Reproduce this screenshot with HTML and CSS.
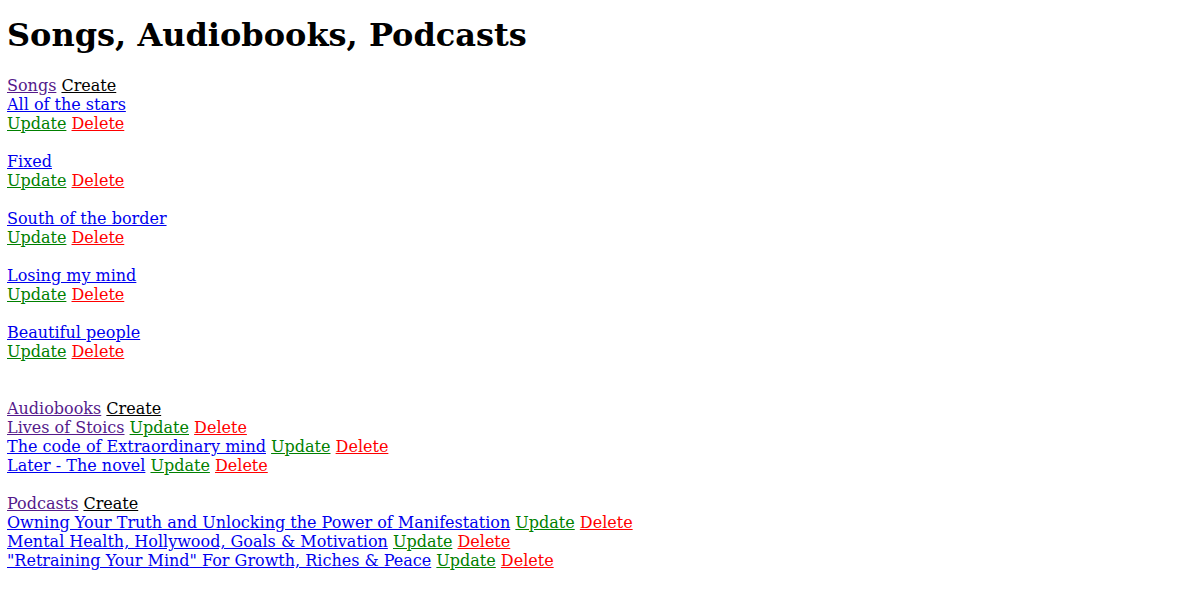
FILE: index.html
```html
<!DOCTYPE html>
<html>
<head>
<meta charset="utf-8">
<title>Songs, Audiobooks, Podcasts</title>
<link rel="stylesheet" href="styles.css">
</head>
<body>
<h1 class="title">Songs, Audiobooks, Podcasts</h1>
<div class="section">
  <div class="head"><a class="visited" href="#">Songs</a> <a class="create" href="#">Create</a></div>
  <div class="song"><a class="item" href="#">All of the stars</a><br><a class="update" href="#">Update</a> <a class="delete" href="#">Delete</a></div>
  <div class="song"><a class="item" href="#">Fixed</a><br><a class="update" href="#">Update</a> <a class="delete" href="#">Delete</a></div>
  <div class="song"><a class="item" href="#">South of the border</a><br><a class="update" href="#">Update</a> <a class="delete" href="#">Delete</a></div>
  <div class="song"><a class="item" href="#">Losing my mind</a><br><a class="update" href="#">Update</a> <a class="delete" href="#">Delete</a></div>
  <div class="song last"><a class="item" href="#">Beautiful people</a><br><a class="update" href="#">Update</a> <a class="delete" href="#">Delete</a></div>
</div>
<div class="section">
  <div class="head"><a class="visited" href="#">Audiobooks</a> <a class="create" href="#">Create</a></div>
  <div class="row"><a class="visited" href="#">Lives of Stoics</a> <a class="update" href="#">Update</a> <a class="delete" href="#">Delete</a></div>
  <div class="row"><a class="item" href="#">The code of Extraordinary mind</a> <a class="update" href="#">Update</a> <a class="delete" href="#">Delete</a></div>
  <div class="row"><a class="item" href="#">Later - The novel</a> <a class="update" href="#">Update</a> <a class="delete" href="#">Delete</a></div>
</div>
<div class="section">
  <div class="head"><a class="visited" href="#">Podcasts</a> <a class="create" href="#">Create</a></div>
  <div class="row"><a class="item" href="#">Owning Your Truth and Unlocking the Power of Manifestation</a> <a class="update" href="#">Update</a> <a class="delete" href="#">Delete</a></div>
  <div class="row"><a class="item" href="#">Mental Health, Hollywood, Goals &amp; Motivation</a> <a class="update" href="#">Update</a> <a class="delete" href="#">Delete</a></div>
  <div class="row"><a class="item" href="#">"Retraining Your Mind" For Growth, Riches &amp; Peace</a> <a class="update" href="#">Update</a> <a class="delete" href="#">Delete</a></div>
</div>
</body>
</html>
```
FILE: styles.css
```css
body {
  margin: 8px 8px 8px 7px;
  font-family: "DejaVu Serif", serif;
  font-size: 16px;
  color: #000;
}
.title {
  font-size: 32px;
  font-weight: bold;
  margin: 0 0 22px;
  padding-top: 8px;
}
.section {
  margin-bottom: 19px;
}
a { text-decoration: underline; }
.visited { color: #551a8b; }
.create { color: #000; }
.item { color: #0000ee; }
.update { color: #008000; }
.delete { color: #ff0000; }
.song { margin-bottom: 19px; }
.song.last { margin-bottom: 38px; }
```
